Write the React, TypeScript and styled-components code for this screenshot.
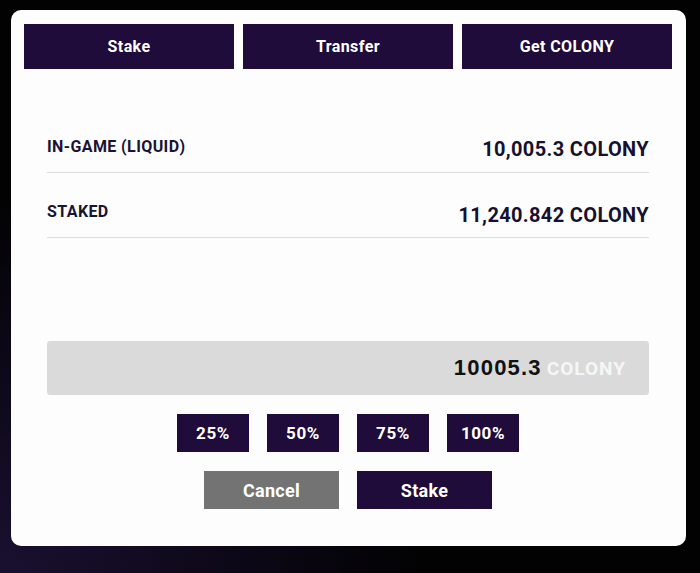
import styled, { createGlobalStyle } from "styled-components";

const GlobalStyle = createGlobalStyle`
  html, body {
    margin: 0;
    padding: 0;
    height: 100%;
  }

  body {
    background: radial-gradient(
        ellipse 420px 380px at 0% 100%,
        #1a1030 0%,
        #0d0818 55%,
        transparent 100%
      ),
      #020203;
    font-family: Roboto, "Noto Sans", sans-serif;
    overflow: hidden;
  }
`;

const Modal = styled.div`
  box-sizing: border-box;
  width: 675px;
  height: 536px;
  margin: 10px 0 0 11px;
  padding: 14px 14px 37px 13px;
  background: #fdfdfd;
  border-radius: 10px;
  display: flex;
  flex-direction: column;
`;

const Tabs = styled.div`
  display: grid;
  grid-template-columns: repeat(3, 1fr);
  gap: 9px;
`;

const Tab = styled.button`
  height: 45px;
  border: none;
  background: #1f0c3b;
  color: #fff;
  font-family: inherit;
  font-size: 16px;
  font-weight: 700;
  letter-spacing: 0.4px;
  cursor: pointer;
`;

const Body = styled.div`
  padding: 39px 23px 0 23px;
  display: flex;
  flex-direction: column;
`;

const Row = styled.div`
  box-sizing: border-box;
  height: 65px;
  padding-top: 29px;
  display: flex;
  justify-content: space-between;
  align-items: flex-start;
  border-bottom: 1px solid #dcdcdc;
  color: #1a1433;
`;

const Label = styled.span`
  font-size: 16px;
  line-height: 20px;
  font-weight: 700;
  letter-spacing: 0.4px;
`;

const Value = styled.span<{ $shift?: number }>`
  font-size: 20px;
  line-height: 24px;
  font-weight: 700;
  letter-spacing: 0.35px;
  color: #17112f;
  margin-top: ${(p) => p.$shift ?? 0}px;
`;

const AmountBox = styled.div`
  box-sizing: border-box;
  height: 54px;
  margin-top: 103px;
  padding-right: 23px;
  background: #dadada;
  border-radius: 3px;
  display: flex;
  align-items: center;
  justify-content: flex-end;
  gap: 5px;
`;

const Amount = styled.span`
  font-family: "Liberation Sans", Arial, sans-serif;
  font-size: 22px;
  font-weight: 700;
  letter-spacing: 1.2px;
  color: #111;
`;

const Unit = styled.span`
  font-size: 19px;
  font-weight: 700;
  letter-spacing: 1px;
  color: #f6f6f6;
`;

const ButtonRow = styled.div`
  display: flex;
  justify-content: center;
  gap: 18px;
  margin-top: 19px;
`;

const Button = styled.button<{ $w: number; $grey?: boolean }>`
  width: ${(p) => p.$w}px;
  height: 38px;
  border: none;
  background: ${(p) => (p.$grey ? "#737373" : "#1f0c3b")};
  color: #fff;
  font-family: inherit;
  font-size: ${(p) => (p.$w > 100 ? 18 : 17)}px;
  font-weight: 700;
  letter-spacing: ${(p) => (p.$w > 100 ? 0.3 : 0.6)}px;
  cursor: pointer;
`;

export default function App() {
  return (
    <>
      <GlobalStyle />
      <Modal>
        <Tabs>
          <Tab>Stake</Tab>
          <Tab>Transfer</Tab>
          <Tab>Get COLONY</Tab>
        </Tabs>
        <Body>
          <Row>
            <Label>IN-GAME (LIQUID)</Label>
            <Value>10,005.3 COLONY</Value>
          </Row>
          <Row>
            <Label>STAKED</Label>
            <Value $shift={1}>11,240.842 COLONY</Value>
          </Row>
          <AmountBox>
            <Amount>10005.3</Amount>
            <Unit>COLONY</Unit>
          </AmountBox>
          <ButtonRow>
            <Button $w={72}>25%</Button>
            <Button $w={72}>50%</Button>
            <Button $w={72}>75%</Button>
            <Button $w={72}>100%</Button>
          </ButtonRow>
          <ButtonRow>
            <Button $w={135} $grey>
              Cancel
            </Button>
            <Button $w={135}>Stake</Button>
          </ButtonRow>
        </Body>
      </Modal>
    </>
  );
}
